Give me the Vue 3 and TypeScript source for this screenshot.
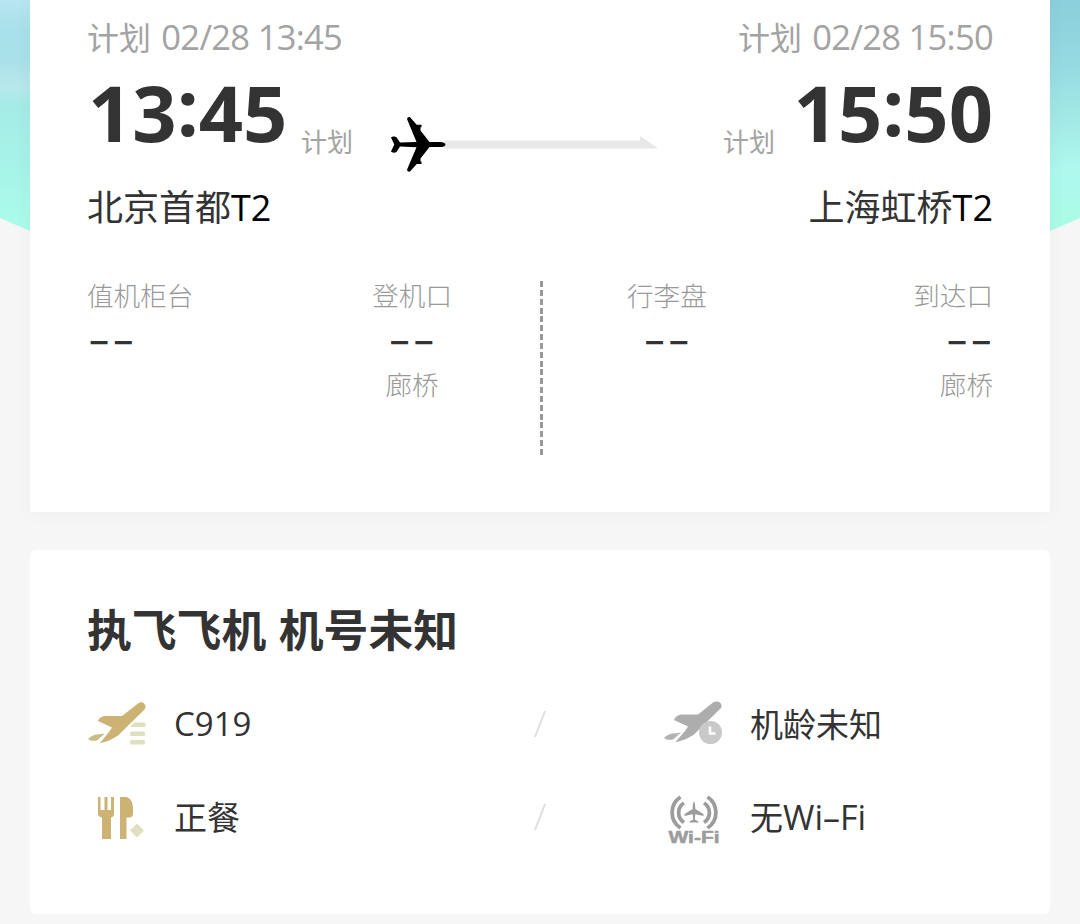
<template>
  <div class="page">
    <div class="sky">
      <div class="sky-left"></div>
      <div class="sky-right"></div>
    </div>

    <!-- Flight card -->
    <section class="card flight">
      <div class="row plan">
        <span>{{ departure.label }} <b>{{ departure.planned }}</b></span>
        <span>{{ arrival.label }} <b>{{ arrival.planned }}</b></span>
      </div>

      <div class="row times">
        <strong class="time">{{ departure.hours }}<i>:</i>{{ departure.minutes }}</strong>
        <span class="state state-left">{{ departure.label }}</span>
        <svg class="route" width="270" height="60" viewBox="0 0 270 60">
          <path d="M54 30.500H250V26L267 37.500V38.500H54Z" fill="#e8e8e8" />
          <path
            d="M55.500 34.500c0-1.700-2.500-2.600-5-2.600H39.500L30.500 20.500V17.300H31.500V14.700H26.700L20.300 7.500C19 6.300 16.600 7.700 17.200 9.500L26.500 31.900L10 32.600L6.500 27.200C5 26 2 26.500 1 27.500L4.300 34.500L1 41.600C2 43 5 43 6.500 42L10 36.600L26.500 37.200L17.200 59.200C16.600 61 19 62.500 20.300 61.200L26.700 54.100H31.500V51.600H30.500V48.600L39.500 37.100H50.500c2.500 0 5-.9 5-2.600z"
            fill="#000"
          />
        </svg>
        <span class="state state-right">{{ arrival.label }}</span>
        <strong class="time">{{ arrival.hours }}<i>:</i>{{ arrival.minutes }}</strong>
      </div>

      <div class="row airports">
        <span>{{ departure.airport }}<b>{{ departure.terminal }}</b></span>
        <span>{{ arrival.airport }}<b>{{ arrival.terminal }}</b></span>
      </div>

      <div class="details">
        <div class="half half-left">
          <div v-for="item in departure.details" :key="item.name" class="detail">
            <span class="name">{{ item.name }}</span>
            <span class="value">{{ item.value }}</span>
            <span class="name">{{ item.note }}</span>
          </div>
        </div>
        <div class="divider"></div>
        <div class="half half-right">
          <div v-for="item in arrival.details" :key="item.name" class="detail">
            <span class="name">{{ item.name }}</span>
            <span class="value">{{ item.value }}</span>
            <span class="name">{{ item.note }}</span>
          </div>
        </div>
      </div>
    </section>

    <!-- Aircraft card -->
    <section class="card aircraft">
      <h2>执飞飞机 机号未知</h2>

      <div class="feature-row">
        <div class="feature">
          <svg class="icon" width="60" height="60" viewBox="0 -2 60 60">
            <path
              d="M10 25C11 22 14 20 18 20H34L50 7.500C53 5 57.500 6.500 57.500 11C57.500 12.500 56 14 55 15L30 39.500C25 43 17 46.500 12 47L21 36L24 31.500Z"
              fill="#ccb273"
            />
            <path d="M0 43C3 40 6 38.500 9 38.500L17 37.500L9 44.500C6 45 2 45 0 43Z" fill="#c9bd86" />
            <g fill="#e0dfc2">
              <path d="M46 26.500H56Q57.500 26.500 57.500 28V29.500Q57.500 31 56 31H42Z" />
              <rect x="42" y="35.500" width="15" height="4.500" rx="1.500" />
              <rect x="42" y="44" width="15" height="4.500" rx="1.500" />
            </g>
          </svg>
          <span>C919</span>
        </div>
        <i class="slash"></i>
        <div class="feature">
          <svg class="icon" width="60" height="60" viewBox="0 -2 60 60">
            <path
              d="M11 24C12 21 15 18.500 19 18.500H35L50 6.500C54 4 59 6 58.500 10.500C58.500 12 57 13 56 14L31 38.500C26 42 18 45.500 12.500 46L22 35L25 30.500Z"
              fill="#adadad"
            />
            <path d="M1 42C4 39 7 37.500 10 37.500L18 36.500L10 43.500C7 44 3 44 1 42Z" fill="#b3b3b3" />
            <circle cx="47.500" cy="36.500" r="11.500" fill="#c9c9c9" />
            <path d="M47 30.500V37.500H52.500" fill="none" stroke="#fff" stroke-width="2.500" />
          </svg>
          <span>机龄未知</span>
        </div>
      </div>

      <div class="feature-row">
        <div class="feature">
          <svg class="icon" width="60" height="60" viewBox="0 -2 60 60">
            <path
              d="M10 8H12.500V21H16.500V8H19.500V21H23V8H26V25C26 27 25 28 23 28.500V50H14V28.500C11.500 28 10 27 10 25Z"
              fill="#ccb273"
            />
            <path d="M32 8H38C43 9 45 14 45 19V25C45 27 43.500 28.500 41.500 28.500H38.500V50H32Z" fill="#ccb273" />
            <path d="M49 34.500L56 41.500L49 48.500L42 41.500Z" fill="#e0dfc2" />
          </svg>
          <span>正餐</span>
        </div>
        <i class="slash"></i>
        <div class="feature">
          <svg class="icon" width="60" height="60" viewBox="0 -2 60 60">
            <g fill="none" stroke="#9c9c9c" stroke-width="3.800">
              <path d="M17.500 8A18.500 18.500 0 0 0 17.500 39" />
              <path d="M21 14A11.500 11.500 0 0 0 21 33.500" />
              <path d="M44.500 8A18.500 18.500 0 0 1 44.500 39" />
              <path d="M41 14A11.500 11.500 0 0 1 41 33.500" />
            </g>
            <path
              d="M31 12.500C31.900 13.500 32.200 15 32.300 20L40.500 25V27L32.300 25.200L31.800 30.500L35.500 32.500V33.500H26.500V32.500L30.200 30.500L29.700 25.200L21.500 27V25L29.700 20C29.800 15 30.100 13.500 31 12.500Z"
              fill="#9c9c9c"
            />
            <text x="5.500" y="54" class="wifi" textLength="51" lengthAdjust="spacingAndGlyphs">Wi-Fi</text>
          </svg>
          <span>无<em>Wi–Fi</em></span>
        </div>
      </div>
    </section>
  </div>
</template>

<script setup lang="ts">
import { ref } from 'vue'

interface Detail {
  name: string
  value: string
  note?: string
}

interface Point {
  label: string
  planned: string
  hours: string
  minutes: string
  airport: string
  terminal: string
  details: Detail[]
}

// Departure
const departure = ref<Point>({
  label: '计划',
  planned: '02/28 13:45',
  hours: '13',
  minutes: '45',
  airport: '北京首都',
  terminal: 'T2',
  details: [
    { name: '值机柜台', value: '--' },
    { name: '登机口', value: '--', note: '廊桥' }
  ]
})

// Arrival
const arrival = ref<Point>({
  label: '计划',
  planned: '02/28 15:50',
  hours: '15',
  minutes: '50',
  airport: '上海虹桥',
  terminal: 'T2',
  details: [
    { name: '行李盘', value: '--' },
    { name: '到达口', value: '--', note: '廊桥' }
  ]
})
</script>

<style>
body {
  margin: 0;
  background: #f6f6f6;
}
</style>

<style scoped>
.page {
  position: relative;
  width: 1080px;
  height: 924px;
  overflow: hidden;
  background: #f6f6f6;
  color: #333;
  font-family: 'Open Sans', 'Noto Sans CJK SC', sans-serif;
}

.sky {
  position: absolute;
  top: 0;
  left: 0;
  width: 1080px;
  height: 231px;
  display: flex;
  justify-content: space-between;
  clip-path: polygon(0 0, 100% 0, 100% 218px, 1050px 231px, 30px 231px, 0 218px);
}

.sky-left {
  width: 40px;
  background: linear-gradient(#b9e5f0 0, #a8e1eb 30px, #a9e1e9 60px, #b9e8ec 88px, #a4ebe6 105px, #a6f2e8 160px, #aafcea 225px);
}

.sky-right {
  width: 40px;
  background: linear-gradient(#8bcfdc 0, #95d9e1 60px, #a3e9e6 120px, #aef8ee 170px, #aafce6 225px);
}

.card {
  position: relative;
  box-sizing: border-box;
  width: 1020px;
  margin: 0 30px;
  padding: 0 57px;
  background: #fff;
}

.flight {
  height: 512px;
  padding-top: 13px;
  box-shadow: 0 0 20px rgba(0, 0, 0, 0.04);
}

.row {
  display: flex;
  justify-content: space-between;
}

.plan {
  height: 48px;
  line-height: 48px;
  font-size: 32px;
  color: #a3a3a3;
}

.plan b {
  margin-left: 2px;
  font-size: 34.500px;
  font-weight: 400;
  letter-spacing: -0.700px;
}

.times {
  height: 94px;
  padding-top: 14px;
  box-sizing: border-box;
  justify-content: flex-start;
}

.time {
  width: 200px;
  padding-left: 1px;
  line-height: 75px;
  font-size: 77.500px;
  font-weight: 700;
}

.time:last-child {
  text-align: right;
}

/* colon sits at the middle of the digits */
.time i {
  position: relative;
  top: -6px;
  font-style: normal;
}

.state {
  padding-top: 49px;
  line-height: 36px;
  font-size: 26px;
  color: #a3a3a3;
}

.state-left {
  margin-left: 13px;
}

.state-right {
  margin-left: auto;
  margin-right: 17px;
}

.route {
  margin: 35px 0 0 37px;
  overflow: visible;
}

.airports {
  height: 50px;
  margin-top: 28px;
  line-height: 50px;
  font-size: 36px;
}

.airports b {
  font-weight: 400;
  color: #000;
}

.details {
  display: flex;
  margin-top: 48px;
}

.half {
  display: flex;
  justify-content: space-between;
  width: 365px;
}

.half-right {
  width: 366px;
}

.divider {
  width: 3px;
  height: 174px;
  margin: 0 84px 0 88px;
  background: repeating-linear-gradient(#999 0, #999 6px, transparent 6px, transparent 8.840px);
}

.detail {
  display: flex;
  flex-direction: column;
  align-items: center;
}

.half-left .detail:first-child {
  align-items: flex-start;
}

.half-right .detail:last-child {
  align-items: flex-end;
}

.name {
  line-height: 30px;
  font-size: 26.600px;
  font-weight: 300;
  color: #999;
}

.value {
  height: 59px;
  line-height: 61px;
  font-family: Inter, sans-serif;
  font-size: 36px;
  font-weight: 500;
  transform: scaleX(1.450);
}

.half-left .detail:first-child .value {
  transform-origin: left;
}

.half-right .detail:last-child .value {
  transform-origin: right;
}

.aircraft {
  height: 364px;
  margin-top: 38px;
  padding-top: 49px;
  border-radius: 6px;
}

h2 {
  margin: 0 0 28px;
  line-height: 61px;
  font-size: 44.800px;
  font-weight: 700;
  word-spacing: 1px;
}

.feature-row {
  display: flex;
  align-items: center;
  height: 72px;
  margin-bottom: 21px;
}

.feature {
  display: flex;
  align-items: center;
  width: 329px;
  font-size: 33px;
}

.feature span {
  padding-bottom: 2px;
}

.icon {
  flex: none;
  margin-right: 27px;
}

.feature em {
  font-size: 34px;
  font-style: normal;
}

.feature:first-child {
  width: 446px;
  padding-left: 1px;
}

.feature:first-child .icon {
  margin-right: 26px;
}

.slash {
  width: 2px;
  height: 26px;
  margin: 0 122px 0 5px;
  background: #ddd;
  transform: skewX(-21deg);
}

.wifi {
  fill: #9c9c9c;
  stroke: #9c9c9c;
  stroke-width: 0.500px;
  font-family: 'Liberation Sans', sans-serif;
  font-size: 16px;
  font-weight: 700;
}
</style>
